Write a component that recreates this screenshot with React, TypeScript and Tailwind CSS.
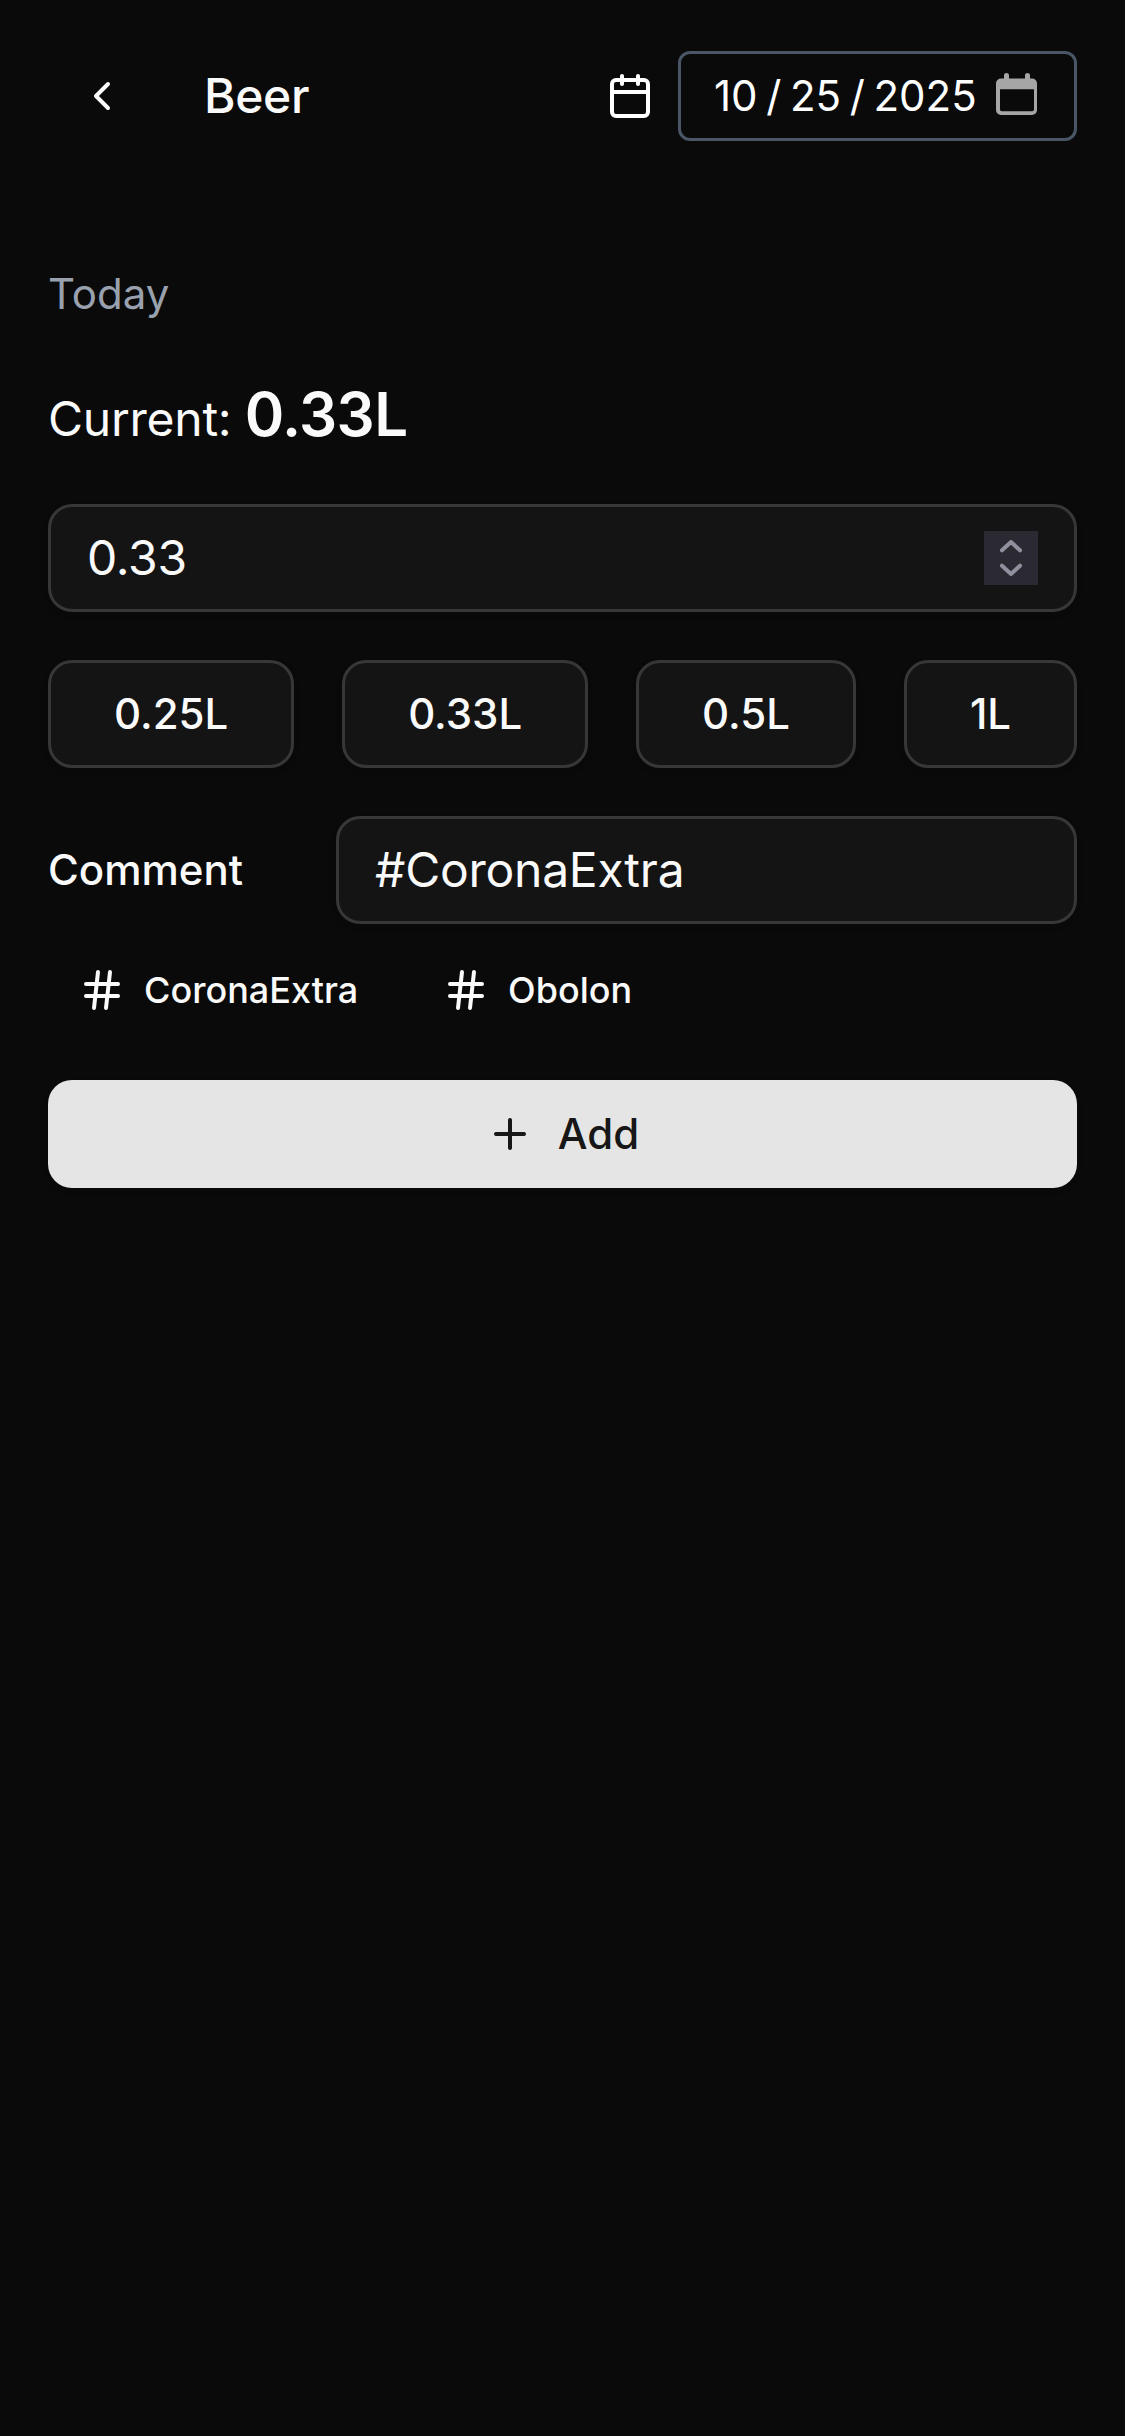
import { Calendar, ChevronLeft, Hash, Plus } from "lucide-react";

const amounts = ["0.25L", "0.33L", "0.5L", "1L"];
const tags = ["CoronaExtra", "Obolon"];

const field =
  "rounded-3xl border-[3px] border-[#373737] bg-[#141414] shadow-[0_3px_6px_rgba(0,0,0,0.1)]";

function DatePickerIcon() {
  return (
    <svg className="mb-1 ml-auto h-[42px] w-[41px]" viewBox="0 0 41 42" fill="#a6a6a6">
      <path
        fillRule="evenodd"
        d="M10.500 0a2.500 2.500 0 0 1 2.500 2.500V5.500h16V2.500a2.500 2.500 0 0 1 5 0V5.500H36a5 5 0 0 1 5 5v26.500a5 5 0 0 1-5 5H5a5 5 0 0 1-5-5V10.500a5 5 0 0 1 5-5h3V2.500A2.500 2.500 0 0 1 10.500 0ZM4 16.300v20.200a1.700 1.700 0 0 0 1.700 1.700h30.600a1.700 1.700 0 0 0 1.700-1.700V16.300Z"
      />
    </svg>
  );
}

function Spinner() {
  return (
    <span className="flex h-[54px] w-[54px] items-center justify-center bg-[#2b2a33]">
      <svg
        className="h-9 w-6"
        viewBox="0 0 24 36"
        fill="none"
        stroke="#8f8f9d"
        strokeWidth="4"
        strokeLinecap="round"
        strokeLinejoin="round"
      >
        <path d="M3 10.300 12 2l9 8.300M3 25.700 12 34l9-8.300" />
      </svg>
    </span>
  );
}

export default function App() {
  return (
    <div className="min-h-[2436px] bg-[#0a0a0a] px-12 pt-[51px] font-[Inter,sans-serif] text-[#fafafa]">
      <header className="flex h-[90px] items-center">
        <button className="flex h-[108px] w-[108px] shrink-0 items-center justify-center">
          <ChevronLeft size={48} />
        </button>
        <h1 className="ml-12 text-5xl font-medium leading-[72px] tracking-[-0.3px]">Beer</h1>
        <div className="ml-auto flex items-center gap-6">
          <Calendar size={48} className="text-white" />
          <div className="flex h-[90px] w-[399px] items-center rounded-xl border-[3px] border-[#4a5565] pl-[33px] pr-[37px] text-[42px] leading-[60px] text-white">
            <span className="flex gap-[8.6px]">
              <span>10</span>
              <span>/</span>
              <span>25</span>
              <span>/</span>
              <span>2025</span>
            </span>
            <DatePickerIcon />
          </div>
        </div>
      </header>

      <main className="flex flex-col">
        <p className="mt-[123px] text-[42px] leading-[60px] text-[#99a1af]">Today</p>
        <p className="mt-12 h-[84px] text-5xl leading-[84px] tracking-[-0.25px]">
          Current: <span className="text-[60px] font-semibold tracking-[-0.6px]">0.33L</span>
        </p>

        <div
          className={`mt-12 flex h-[108px] items-center justify-between px-9 text-5xl tracking-[-0.25px] ${field}`}
        >
          <span>0.33</span>
          <Spinner />
        </div>

        <div className="mt-12 flex gap-12">
          {amounts.map((a) => (
            <button
              key={a}
              className={`h-[108px] grow px-12 text-[42px] font-medium leading-[60px] ${field}`}
            >
              {a}
            </button>
          ))}
        </div>

        <div className="mt-12 flex items-center">
          <label className="w-72 text-[42px] font-medium leading-[42px]">Comment</label>
          <div
            className={`flex h-[108px] grow items-center px-9 text-5xl tracking-[-0.25px] ${field}`}
          >
            #CoronaExtra
          </div>
        </div>

        <div className="mt-[18px] flex gap-6">
          {tags.map((t) => (
            <button
              key={t}
              className="flex h-24 items-center gap-[18px] px-[30px] text-4xl font-medium"
            >
              <Hash size={48} />
              {t}
            </button>
          ))}
        </div>

        <button className="mt-[42px] flex h-[108px] items-center justify-center gap-6 rounded-3xl bg-[#e5e5e5] text-[42px] font-medium leading-[60px] text-[#171717] shadow-[0_3px_6px_rgba(0,0,0,0.1)]">
          <Plus size={48} />
          Add
        </button>
      </main>
    </div>
  );
}
